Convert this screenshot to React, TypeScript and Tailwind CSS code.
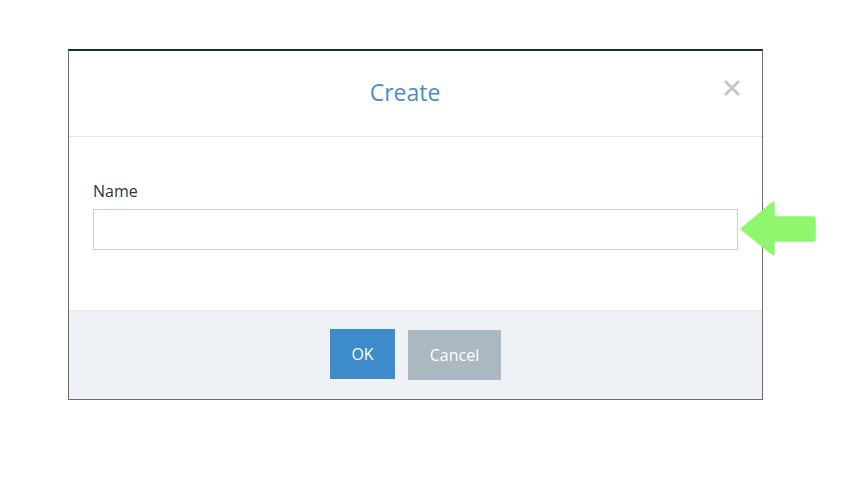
export default function App() {
    return (
        <div className="relative w-[856px] h-[478px] bg-white pt-[49px] pl-[68px]" style={{ fontFamily: "'Open Sans', sans-serif" }}>
            <div className="w-[695px] border-t-2 border-t-[#13303b] border-x border-b border-x-[#6b6b6b] border-b-[#6b6b6b] bg-white">
                {/* header */}
                <div className="relative h-[86px] flex items-center justify-center border-b border-[#e3e3e3]">
                    <h2 className="text-[23px] text-[#4a8dd1] font-normal leading-none -mt-[2px] mr-[21px]">Create</h2>
                    <button className="absolute right-[20px] top-[27px] w-[20px] h-[20px] flex items-center justify-center text-[#c6c6c6]">
                        <svg width="18" height="18" viewBox="0 0 18 18">
                            <path d="M2 2 L16 16 M16 2 L2 16" stroke="currentColor" strokeWidth="3" />
                        </svg>
                    </button>
                </div>
                {/* body */}
                <div className="h-[173px] px-[24px] pt-[44px]">
                    <label className="block text-[16px] text-[#333] leading-[21px] mb-[7px]">Name</label>
                    <input className="block w-[645px] h-[41px] border border-[#cfcfcf] outline-none px-3 text-sm" />
                </div>
                {/* footer */}
                <div className="h-[89px] bg-[#eef1f5] border-t border-[#e6e9ee] flex items-start justify-center gap-[13px] pt-[18px]">
                    <button className="w-[65px] h-[50px] bg-[#3e8bcb] text-white text-[16px]">OK</button>
                    <button className="w-[93px] h-[50px] mt-px bg-[#abb8c1] text-white text-[16px]">Cancel</button>
                </div>
            </div>
            {/* green arrow overlay */}
            <svg className="absolute left-[739px] top-[200px]" width="78" height="56" viewBox="0 0 78 56">
                <path
                    d="M2 29 L33 3 Q35 1.5 35 4 L35 17 L74 17 Q76 17 76 19 L76 39 Q76 41 74 41 L35 41 L35 53 Q35 55.5 33 54 Z"
                    fill="#8ff66e"
                    stroke="#8ff66e"
                    strokeWidth="1.5"
                    strokeLinejoin="round"
                />
            </svg>
        </div>
    );
}
